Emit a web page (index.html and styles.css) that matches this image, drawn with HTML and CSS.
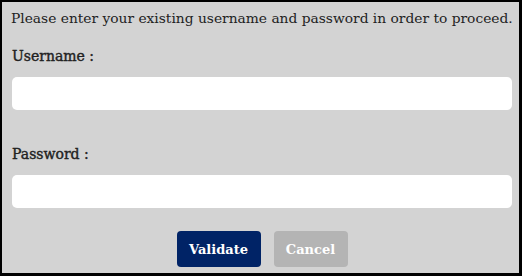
FILE: index.html
```html
<!DOCTYPE html>
<html lang="en">
<head>
    <meta charset="UTF-8">
    <meta name="viewport" content="width=device-width, initial-scale=1.0">
    <link rel="stylesheet" href="styles.css">
    <title>Login</title>
</head>
<body>
    <div class="panel">
        <p class="intro">Please enter your existing username and password in order to proceed.</p>
        <form class="login">
            <label class="field">
                <span class="caption">Username :</span>
                <input type="text" name="username">
            </label>
            <label class="field">
                <span class="caption">Password :</span>
                <input type="password" name="password">
            </label>
            <div class="actions">
                <button type="submit" class="btn validate">Validate</button>
                <button type="button" class="btn cancel">Cancel</button>
            </div>
        </form>
    </div>
</body>
</html>
```

FILE: styles.css
```css
*{
    margin: 0px;
    padding: 0px;
    box-sizing: border-box;
    font-family: 'DejaVu Serif', 'Liberation Serif', serif;
}

body{
    width: 522px;
    height: 276px;
    background: #000;
}
.panel{
    width: 522px;
    height: 276px;
    background: #d3d3d3;
    border-style: solid;
    border-color: #000;
    border-width: 2px 3px 3px 2px;
    padding: 7px 7px 0 10px;
    color: #222;
}
.intro{
    font-size: 13.8px;
    line-height: 18px;
    white-space: nowrap;
    margin-left: -1px;
}
.login{
    display: flex;
    flex-direction: column;
}
.field{
    display: flex;
    flex-direction: column;
    margin-top: 20px;
}
.field + .field{
    margin-top: 35px;
}
.caption{
    font-size: 14px;
    line-height: 18px;
    -webkit-text-stroke: 0.4px #222;
    margin-bottom: 12px;
}
.field input{
    height: 33px;
    border: none;
    border-radius: 5px;
    background: #fff;
    outline: none;
}
.actions{
    display: flex;
    justify-content: center;
    gap: 13px;
    margin-top: 23px;
}
.btn{
    height: 36px;
    border: none;
    border-radius: 4px;
    color: #fff;
    font-size: 13px;
    font-weight: bold;
    cursor: pointer;
}
.validate{
    width: 84px;
    background: #002366;
}
.cancel{
    width: 74px;
    background: #b4b4b4;
}
```
